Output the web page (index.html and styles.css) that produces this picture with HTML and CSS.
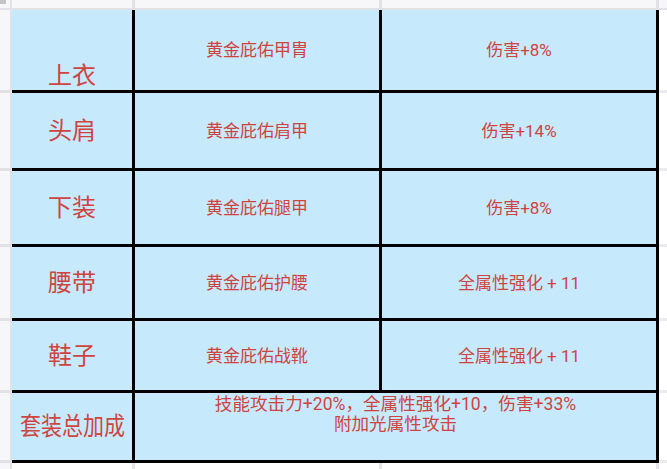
FILE: index.html
```html
<!DOCTYPE html>
<html lang="zh-CN">
<head>
<meta charset="utf-8">
<title>套装属性</title>
<link rel="stylesheet" href="styles.css">
</head>
<body>
<div class="sheet">
  <div class="corner"></div>
  <div class="colhead"></div>
  <div class="colhead"></div>
  <div class="colhead"></div>
  <div class="colhead rest"></div>

  <div class="rowhead"></div>
  <div class="cell label bottom">上衣</div>
  <div class="cell item">黄金庇佑甲胄</div>
  <div class="cell item">伤害+8%</div>
  <div class="outside"></div>

  <div class="rowhead"></div>
  <div class="cell label">头肩</div>
  <div class="cell item">黄金庇佑肩甲</div>
  <div class="cell item">伤害+14%</div>
  <div class="outside"></div>

  <div class="rowhead"></div>
  <div class="cell label">下装</div>
  <div class="cell item">黄金庇佑腿甲</div>
  <div class="cell item">伤害+8%</div>
  <div class="outside"></div>

  <div class="rowhead"></div>
  <div class="cell label">腰带</div>
  <div class="cell item">黄金庇佑护腰</div>
  <div class="cell item">全属性强化 + 11</div>
  <div class="outside"></div>

  <div class="rowhead"></div>
  <div class="cell label">鞋子</div>
  <div class="cell item">黄金庇佑战靴</div>
  <div class="cell item">全属性强化 + 11</div>
  <div class="outside"></div>

  <div class="rowhead"></div>
  <div class="cell label"><span class="squeeze">套装总加成</span></div>
  <div class="cell item summary span2">技能攻击力+20%，全属性强化+10，伤害+33%<br>附加光属性攻击</div>
  <div class="outside"></div>

  <div class="rowhead foot"></div>
  <div class="footcell"></div>
  <div class="footcell"></div>
  <div class="footcell"></div>
  <div class="footcell rest"></div>
</div>
</body>
</html>
```

FILE: styles.css
```css
html, body {
  margin: 0;
  padding: 0;
  background: #ffffff;
}

body {
  width: 667px;
  height: 469px;
  overflow: hidden;
  font-family: Roboto, "Noto Sans CJK SC", sans-serif;
}

.sheet {
  display: grid;
  grid-template-columns: 12px 123px 247px 277px 1fr;
  grid-template-rows: 10px 83px 78px 76px 74px 72px 70px 1fr;
  width: 667px;
  height: 469px;
}

.sheet > div {
  box-sizing: border-box;
}

.corner {
  position: relative;
  background: #f7f7f9;
  border-right: 2px solid #e2e2e6;
  border-bottom: 2px solid #e2e2e6;
}

.corner::before {
  content: "";
  position: absolute;
  left: 0;
  top: 0;
  width: 6px;
  height: 4px;
  background: #c4c4c8;
}

.colhead {
  background: #f7f7f9;
  border-bottom: 2px solid #e2e2e6;
  border-right: 3px solid #e2e2e6;
}

.colhead.rest {
  border-right: 0;
}

.rowhead {
  background: #f7f7f9;
  border-right: 2px solid #e2e2e6;
  border-bottom: 3px solid #e2e2e6;
}

.rowhead.foot {
  border-bottom: 0;
}

.cell {
  background: #c6e9fc;
  border-right: 3px solid #000000;
  border-bottom: 3px solid #000000;
  color: #d0443f;
  display: flex;
  align-items: center;
  justify-content: center;
  text-align: center;
}

.label {
  font-size: 24px;
  line-height: 28px;
}

.label.bottom {
  align-items: flex-end;
}

.squeeze {
  display: inline-block;
  font-size: 25px;
  white-space: nowrap;
  transform: scaleX(0.84);
}

.item {
  font-size: 17px;
  line-height: 20px;
}

.item.summary {
  align-items: flex-start;
  font-size: 17.6px;
  padding-top: 1px;
}

.span2 {
  grid-column: span 2;
}

.outside {
  background: #ffffff;
  border-bottom: 3px solid #ebebef;
}

.footcell {
  background: #ffffff;
  border-right: 3px solid #e6e6ea;
}

.footcell.rest {
  border-right: 0;
}
```
